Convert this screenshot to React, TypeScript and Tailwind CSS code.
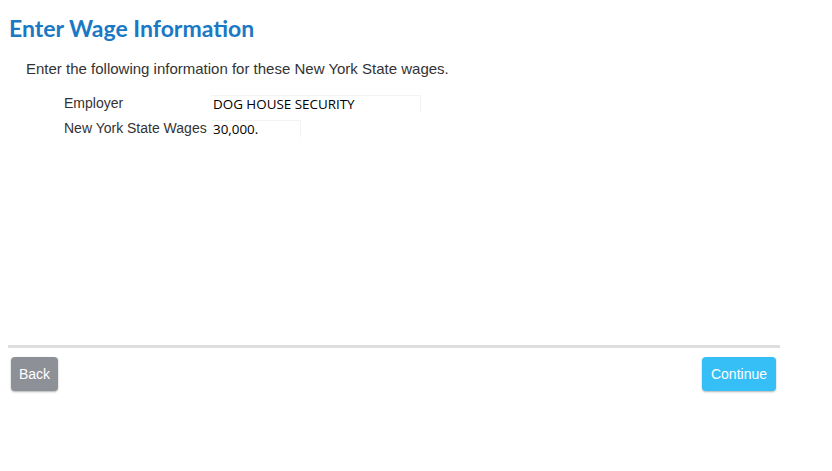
import React from 'react';

const Field: React.FC<{ label: string; value: string; width: string }> = ({ label, value, width }) => (
  <div className="flex items-center h-[25px]">
    <div className="w-[147px] text-[14px] text-[#333]">{label}</div>
    <div
      className={`${width} h-[17px] flex items-center pl-[2px] text-[13.4px] text-black border-t border-r border-[#f3f3f3]`}
      style={{ fontFamily: '"Open Sans", "Noto Sans", sans-serif' }}
    >
      {value}
    </div>
  </div>
);

const App: React.FC = () => {
  return (
    <div className="w-[832px] h-[471px] bg-white" style={{ fontFamily: '"Liberation Sans", Arial, sans-serif' }}>
      <div className="w-[780px] pl-[9px] pt-[14px]">
        <h1
          className="text-[23px] font-bold text-[#1a78c4] leading-[28px]"
          style={{ fontFamily: 'Lato, "Open Sans", sans-serif' }}
        >
          Enter Wage Information
        </h1>

        <p className="mt-[18px] ml-[17px] text-[15px] text-[#333] leading-[18px]">
          Enter the following information for these New York State wages.
        </p>

        <div className="mt-[13px] ml-[55px] flex flex-col">
          <Field label="Employer" value="DOG HOUSE SECURITY" width="w-[210px]" />
          <Field label="New York State Wages" value="30,000." width="w-[90px]" />
        </div>
      </div>

      <div className="mt-[204px] ml-[8px] w-[772px] h-[3px] bg-[#dedede]" />

      <div className="ml-[11px] mr-[56px] mt-[9px] flex justify-between">
        <button className="h-[34px] px-[8px] rounded-[4px] bg-[#8e9097] text-white text-[14px] shadow-[0_1px_2px_rgba(0,0,0,0.3)]">
          Back
        </button>
        <button className="h-[34px] px-[9px] rounded-[4px] bg-[#36bff6] text-white text-[14px] shadow-[0_1px_2px_rgba(0,0,0,0.3)]">
          Continue
        </button>
      </div>
    </div>
  );
};

export default App;
